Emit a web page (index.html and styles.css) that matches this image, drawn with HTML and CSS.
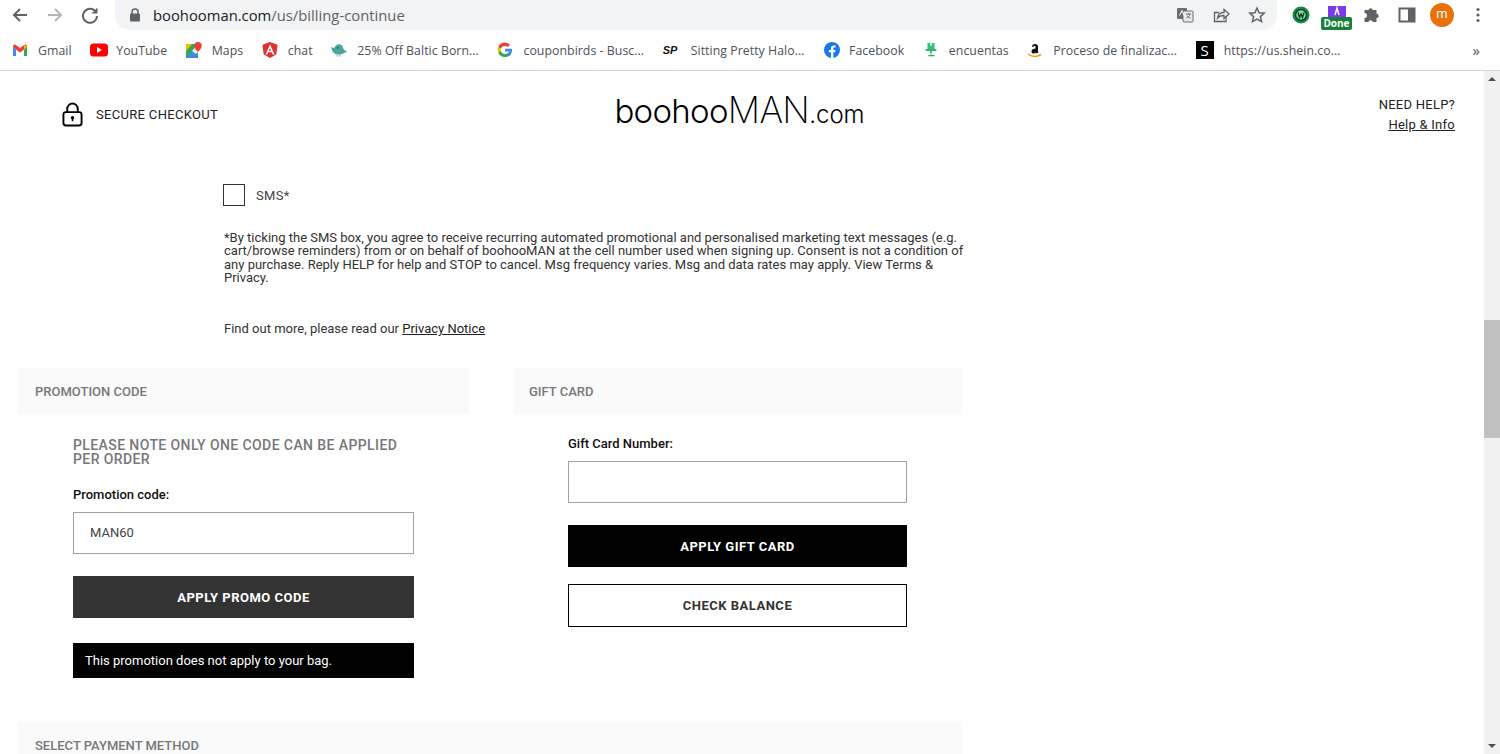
FILE: index.html
```html
<!DOCTYPE html>
<html lang="en">
<head>
    <meta charset="UTF-8">
    <title>boohooMAN - Billing</title>
    <link rel="stylesheet" href="styles.css">
</head>
<body>
    <div class="toolbar">
        <div class="nav-buttons">
            <svg class="nav-icon" viewBox="0 0 18 18"><path d="M16 9H3M9 3L3 9l6 6" fill="none" stroke="#5f6368" stroke-width="2"/></svg>
            <svg class="nav-icon" viewBox="0 0 18 18"><path d="M2 9h13M9 3l6 6-6 6" fill="none" stroke="#b4b6b9" stroke-width="2"/></svg>
            <svg class="nav-icon" viewBox="0 0 18 18"><path d="M14.5 5.5A7 7 0 1 0 16 10" fill="none" stroke="#5f6368" stroke-width="2"/><path d="M16.5 1.5v6h-6z" fill="#5f6368"/></svg>
        </div>
        <div class="omnibox">
            <svg class="lock-small" viewBox="0 0 12 14"><path d="M3 6V4a3 3 0 0 1 6 0v2" fill="none" stroke="#5f6368" stroke-width="1.5"/><rect x="1" y="5.500" width="10" height="8" rx="1" fill="#5f6368"/></svg>
            <span class="url"><span class="url-host">boohooman.com</span>/us/billing-continue</span>
            <div class="omni-actions">
                <svg class="omni-icon" viewBox="0 0 18 18"><rect x="1" y="2" width="10" height="11" rx="1" fill="#6b6f73"/><rect x="7" y="5" width="10" height="11" rx="1" fill="#e8eaed" stroke="#6b6f73"/><path d="M10 8h5M12.500 7v1M14 8c-.5 2-2 3.500-3.500 4M11 9.500c.7 1.200 2 2.200 3.500 2.700" fill="none" stroke="#5f6368" stroke-width=".9"/><path d="M3.500 9.500L6 4.500l2 5" fill="none" stroke="#fff"/></svg>
                <svg class="omni-icon" viewBox="0 0 18 18"><path d="M14 10v5.500H2.500V6.500H7" fill="none" stroke="#5f6368" stroke-width="1.300"/><path d="M5.500 12c.5-3.500 3-5.500 6.500-5.500V3.500l5 4.500-5 4.500V9.500c-3 0-5 .7-6.500 2.500z" fill="none" stroke="#5f6368" stroke-width="1.300"/></svg>
                <svg class="omni-icon" viewBox="0 0 18 18"><path d="M9 2l2.100 4.700 5.100.5-3.800 3.400 1.100 5L9 13l-4.500 2.600 1.100-5-3.800-3.400 5.100-.5z" fill="none" stroke="#5f6368" stroke-width="1.500"/></svg>
            </div>
        </div>
        <div class="extensions">
            <svg class="ext-w" viewBox="0 0 18 18"><circle cx="9" cy="9" r="8.500" fill="#1a8a4c"/><circle cx="9" cy="9" r="5.500" fill="#7fd8a0" stroke="#0b3f24" stroke-width="1.500"/><path d="M6 6.500l1.500 5L9 8l1.500 3.500 1.500-5" fill="none" stroke="#0b3f24" stroke-width="1.300"/></svg>
            <div class="ext-done">
                <div class="ext-done-top"><svg class="ext-a" viewBox="0 0 10 10"><path d="M3 9l2-7 2 7" fill="none" stroke="#fff" stroke-width="1.500"/></svg></div>
                <span class="done-badge">Done</span>
            </div>
            <svg class="ext-puzzle" viewBox="0 0 18 18"><path d="M1.500 7V4h4a2.200 2.200 0 0 1 4.300 0h3.700v3.700a2.200 2.200 0 0 1 0 4.400v3.900H9.700a2.200 2.200 0 0 0-4.300 0H1.500v-4a2.300 2.300 0 0 0 0-5z" fill="#5f6368"/></svg>
            <svg class="ext-panel" viewBox="0 0 18 18"><rect x="1.500" y="2.500" width="15" height="13" fill="none" stroke="#5f6368" stroke-width="2"/><rect x="10" y="2.500" width="6.500" height="13" fill="#5f6368"/></svg>
            <span class="avatar">m</span>
            <svg class="ext-menu" viewBox="0 0 4 16"><circle cx="2" cy="2.500" r="1.600" fill="#5f6368"/><circle cx="2" cy="8" r="1.600" fill="#5f6368"/><circle cx="2" cy="13.500" r="1.600" fill="#5f6368"/></svg>
        </div>
    </div>

    <div class="bookmarks">
        <a class="bookmark">
            <svg class="bm-icon" viewBox="0 0 16 16"><path d="M1 14V4l7 5 7-5v10h-3V7.500L8 10.500 4 7.500V14z" fill="#e8e8e8"/><path d="M1 14h3V7.500L1 4.500z" fill="#4285f4"/><path d="M12 14h3V4.500l-3 3z" fill="#34a853"/><path d="M1 4.500C1 2.500 3 1.800 4 3l4 3 4-3c1-1.200 3-.5 3 1.500L12 7.500 8 10.500 4 7.500z" fill="#ea4335"/><path d="M12 3l3 1.500L12 7.500z" fill="#fbbc04"/></svg>
            <span>Gmail</span>
        </a>
        <a class="bookmark">
            <svg class="bm-icon bm-wide" viewBox="0 0 18 14"><rect width="18" height="13" y=".5" rx="3.500" fill="#f00"/><path d="M7 4l5 3-5 3z" fill="#fff"/></svg>
            <span>YouTube</span>
        </a>
        <a class="bookmark">
            <svg class="bm-icon" viewBox="0 0 16 16"><path d="M0 2h12v14H0z" fill="#34a853"/><path d="M0 16l7-7 5 7z" fill="#4285f4"/><path d="M0 2h6L0 9z" fill="#fbbc04"/><path d="M6 9l5-6 1 7-2 2z" fill="#e8e8e8"/><path d="M12 0a3.800 3.800 0 0 1 3.800 3.800C15.800 6.500 12 10 12 10S8.200 6.500 8.200 3.800A3.800 3.800 0 0 1 12 0z" fill="#ea4335"/></svg>
            <span>Maps</span>
        </a>
        <a class="bookmark">
            <svg class="bm-icon" viewBox="0 0 16 16"><path d="M8 0l7.500 2.700-1.200 9.800L8 16l-6.300-3.500L.5 2.700z" fill="#dd3333"/><path d="M8 2.500L3.500 12.500h1.800l.9-2.300h3.600l.9 2.300h1.800zM8 6l1.200 2.800H6.800z" fill="#fff"/></svg>
            <span>chat</span>
        </a>
        <a class="bookmark">
            <svg class="bm-icon" viewBox="0 0 18 16"><path d="M0 5c2 0 3 1 3.500 1C4.500 3 7 1 10 1.500c2 .4 3 2 3.500 4 .6 2 2.500 3.500 4.500 4.500-1 1-2 1-3 1-2 2-8 3-11 1C2 11 1 8 0 5z" fill="#4aa89a"/><path d="M7 13v2.500M10 13v2.500" stroke="#4aa89a"/><circle cx="7.500" cy="5.500" r="1" fill="#1d5c52"/></svg>
            <span>25% Off Baltic Born...</span>
        </a>
        <a class="bookmark">
            <svg class="bm-icon" viewBox="0 0 16 16"><path d="M15 8.200c0-.6 0-1-.1-1.500H8v2.800h4a3.400 3.400 0 0 1-1.500 2.200v1.900h2.400c1.400-1.300 2.100-3.200 2.100-5.400z" fill="#4285f4"/><path d="M8 15c2 0 3.600-.7 4.900-1.800l-2.400-1.900c-.7.500-1.500.7-2.500.7-1.900 0-3.500-1.300-4.100-3H1.400v2A7 7 0 0 0 8 15z" fill="#34a853"/><path d="M3.900 9.100a4.200 4.200 0 0 1 0-2.700v-2H1.400a7 7 0 0 0 0 6.300z" fill="#fbbc04"/><path d="M8 3.900c1.100 0 2 .4 2.800 1.100L13 2.900A7 7 0 0 0 1.400 4.400l2.500 2c.6-1.700 2.200-2.500 4.100-2.500z" fill="#ea4335"/></svg>
            <span>couponbirds - Busc...</span>
        </a>
        <a class="bookmark">
            <span class="bm-sp">SP</span>
            <span>Sitting Pretty Halo...</span>
        </a>
        <a class="bookmark">
            <svg class="bm-icon bm-wide" viewBox="0 0 18 18"><circle cx="9" cy="9" r="9" fill="#1877f2"/><path d="M12.500 11.500l.4-2.500h-2.400V7.400c0-.7.300-1.300 1.400-1.300H13V4c-2.500-.5-5.200-.2-5.200 3v2H5.400v2.500h2.400V18h2.700v-6.500z" fill="#fff"/></svg>
            <span>Facebook</span>
        </a>
        <a class="bookmark">
            <svg class="bm-icon" viewBox="0 0 16 18"><path d="M4 1h3v3h2V1h3v7H4z" fill="#2ec27e"/><path d="M2 8h12v2H2z" fill="#1aa866"/><path d="M7 10h2v3H7z" fill="#2ec27e"/><path d="M4 16c2-2 6-2 8-1v1z" fill="#1aa866"/></svg>
            <span>encuentas</span>
        </a>
        <a class="bookmark">
            <svg class="bm-icon" viewBox="0 0 16 16"><path d="M5 4.500C5 3 6.500 2 8 2c2 0 3 1 3 2.500V9c0 .6.200 1 .5 1.200L10 11.500l-1-.8c-1.500 1.300-4.500 1.200-4.500-1.200 0-2.200 2-3 4-3V5c0-1.200-2-1.200-2.300.2z" fill="#111"/><path d="M1 12c4 3 9 3 13 .5" fill="none" stroke="#f90" stroke-width="1.500"/></svg>
            <span>Proceso de finalizac...</span>
        </a>
        <a class="bookmark">
            <span class="bm-shein">S</span>
            <span>https://us.shein.co...</span>
        </a>
        <span class="bm-more">»</span>
    </div>

    <div class="viewport">
        <div class="page">
            <header class="site-header">
                <div class="secure">
                    <svg class="secure-icon" viewBox="0 0 22 26"><path d="M5.500 11V7a5.500 5.500 0 0 1 11 0v4" fill="none" stroke="#000" stroke-width="2"/><rect x="1.500" y="10.500" width="19" height="14" rx="2.500" fill="none" stroke="#000" stroke-width="2"/><circle cx="11" cy="16.500" r="1.800"/><path d="M10.200 17h1.600v3h-1.600z"/></svg>
                    <span>SECURE CHECKOUT</span>
                </div>
                <div class="logo">boohoo<span class="logo-man">MAN</span><span class="logo-com">.com</span></div>
                <div class="help">
                    <span>NEED HELP?</span>
                    <a class="link">Help &amp; Info</a>
                </div>
            </header>

            <main class="checkout">
                <section class="consent">
                    <label class="sms-row"><span class="checkbox"></span>SMS*</label>
                    <p class="consent-text">*By ticking the SMS box, you agree to receive recurring automated promotional and personalised marketing text messages (e.g. cart/browse reminders) from or on behalf of boohooMAN at the cell number used when signing up. Consent is not a condition of any purchase. Reply HELP for help and STOP to cancel. Msg frequency varies. Msg and data rates may apply. View Terms &amp; Privacy.</p>
                    <p class="privacy-note">Find out more, please read our <a class="link">Privacy Notice</a></p>
                </section>

                <div class="code-panels">
                    <section class="panel panel-promo">
                        <h2 class="panel-title">PROMOTION CODE</h2>
                        <div class="panel-body">
                            <h3 class="note">PLEASE NOTE ONLY ONE CODE CAN BE APPLIED PER ORDER</h3>
                            <label class="field-label">Promotion code:</label>
                            <div class="text-field">MAN60</div>
                            <button class="btn btn-dark">APPLY PROMO CODE</button>
                            <div class="promo-error">This promotion does not apply to your bag.</div>
                        </div>
                    </section>
                    <section class="panel panel-gift">
                        <h2 class="panel-title">GIFT CARD</h2>
                        <div class="panel-body">
                            <label class="field-label">Gift Card Number:</label>
                            <div class="text-field"></div>
                            <button class="btn btn-black">APPLY GIFT CARD</button>
                            <button class="btn btn-outline">CHECK BALANCE</button>
                        </div>
                    </section>
                </div>

                <h2 class="panel-title payment-title">SELECT PAYMENT METHOD</h2>
            </main>
        </div>

        <div class="scrollbar">
            <svg class="scroll-arrow" viewBox="0 0 16 16"><path d="M4 10l4-4 4 4z" fill="#505050"/></svg>
            <div class="scroll-track"><div class="scroll-thumb"></div></div>
            <svg class="scroll-arrow" viewBox="0 0 16 16"><path d="M4 6l4 4 4-4z" fill="#505050"/></svg>
        </div>
    </div>
</body>
</html>
```

FILE: styles.css
```css
html, body {
    margin: 0;
    padding: 0;
    height: 754px;
    overflow: hidden;
    background-color: #fff;
    font-family: 'Roboto', 'Liberation Sans', sans-serif;
}

/* browser bar */
.toolbar {
    display: flex;
    align-items: center;
    height: 30px;
}

.nav-buttons {
    display: flex;
    align-items: center;
    gap: 17px;
    width: 115px;
    padding-left: 11px;
    box-sizing: border-box;
}

.nav-icon {
    width: 18px;
    height: 18px;
}

.omnibox {
    display: flex;
    align-items: center;
    width: 1162px;
    height: 30px;
    background-color: #f1f3f4;
    border-radius: 0 0 15px 15px;
    box-sizing: border-box;
    padding: 0 11px 0 14px;
}

.lock-small {
    width: 12px;
    height: 14px;
    margin-right: 12px;
}

.url {
    font-family: 'Open Sans', sans-serif;
    font-size: 14.800px;
    color: #5f6368;
}

.url-host {
    color: #202124;
}

.omni-actions {
    display: flex;
    gap: 18px;
    margin-left: auto;
}

.omni-icon {
    width: 18px;
    height: 18px;
}

.extensions {
    display: flex;
    align-items: center;
    padding-left: 15px;
}

.ext-w {
    width: 18px;
    height: 18px;
    margin-right: 11px;
}

.ext-done {
    position: relative;
    width: 31px;
    height: 30px;
    margin-right: 11px;
}

.ext-done-top {
    width: 18px;
    height: 11px;
    margin: 6px auto 0;
    background-color: #7c3aed;
}

.ext-a {
    display: block;
    width: 10px;
    height: 10px;
    margin: 0 auto;
}

.done-badge {
    position: absolute;
    left: 0;
    top: 17px;
    width: 31px;
    height: 13px;
    line-height: 13px;
    border-radius: 2px;
    background-color: #188038;
    color: #fff;
    font-family: 'Open Sans', sans-serif;
    font-size: 10px;
    font-weight: 700;
    text-align: center;
}

.ext-puzzle {
    width: 18px;
    height: 18px;
    margin-right: 17px;
}

.ext-panel {
    width: 18px;
    height: 18px;
    margin-right: 14px;
}

.avatar {
    width: 24px;
    height: 24px;
    line-height: 22px;
    border-radius: 50%;
    background-color: #e8710a;
    color: #fff;
    font-size: 13px;
    text-align: center;
    margin-right: 22px;
}

.ext-menu {
    width: 4px;
    height: 16px;
}

/* bookmarks */
.bookmarks {
    display: flex;
    align-items: center;
    height: 40px;
    padding-left: 12px;
    border-bottom: 1px solid #d4d5d7;
    font-family: 'Open Sans', sans-serif;
    font-size: 12.300px;
    letter-spacing: 0.05px;
    color: #4d5156;
}

.bookmark {
    display: flex;
    align-items: center;
    gap: 10px;
    margin-right: 18.600px;
    white-space: nowrap;
}

.bm-icon {
    width: 16px;
    height: 16px;
    flex-shrink: 0;
}

.bm-wide {
    width: 18px;
    margin-right: -2px;
}

.bm-sp {
    width: 18px;
    font-family: 'Liberation Sans', sans-serif;
    font-size: 11px;
    font-weight: 700;
    font-style: italic;
    color: #111;
}

.bm-shein {
    width: 18px;
    height: 18px;
    line-height: 18px;
    background-color: #000;
    color: #fff;
    font-size: 15px;
    text-align: center;
}

.bm-more {
    margin-left: auto;
    margin-right: 20px;
    font-size: 15px;
}

/* page */
.viewport {
    display: flex;
    height: 683px;
}

.page {
    flex: 1;
    min-width: 0;
    font-size: 13px;
    color: #333;
    overflow: hidden;
}

.scrollbar {
    display: flex;
    flex-direction: column;
    width: 16px;
    background-color: #f1f1f1;
}

.scroll-arrow {
    width: 16px;
    height: 16px;
    flex-shrink: 0;
}

.scroll-track {
    flex: 1;
}

.scroll-thumb {
    height: 118px;
    margin-top: 233px;
    background-color: #c1c1c1;
}

.site-header {
    display: grid;
    grid-template-columns: 1fr auto 1fr;
    align-items: center;
    height: 82px;
    padding: 2px 29px 0 62px;
}

.secure {
    display: flex;
    align-items: center;
    gap: 13px;
    color: #222;
    font-size: 13px;
    letter-spacing: 0.32px;
}

.secure-icon {
    width: 21px;
    height: 25px;
}

.logo {
    font-family: 'Inter', sans-serif;
    font-weight: 300;
    font-size: 33px;
    letter-spacing: -0.7px;
    color: #000;
    margin: 0 38px 9px 0;
}

.logo-man {
    font-size: 36px;
    font-weight: 200;
    letter-spacing: -0.7px;
}

.logo-com {
    font-size: 24px;
    font-weight: 300;
    letter-spacing: 0;
}

.help {
    display: flex;
    flex-direction: column;
    align-items: flex-end;
    gap: 5px;
    color: #222;
    font-size: 13px;
    letter-spacing: 0.25px;
}

.link {
    color: #222;
    text-decoration: underline;
}

.checkout {
    width: 944px;
    margin-left: 18px;
}

.consent {
    padding: 29px 0 0 206px;
}

.sms-row {
    display: flex;
    align-items: center;
    gap: 11px;
    margin-left: -1px;
    font-size: 13px;
    letter-spacing: 0.3px;
    color: #444;
}

.checkbox {
    width: 20px;
    height: 20px;
    border: 1px solid #333;
    background-color: #fff;
}

.consent-text {
    margin: 25px -8px 0 0;
    line-height: 13.300px;
    color: #333;
}

.privacy-note {
    margin: 38px 0 0;
    line-height: 14px;
}

.code-panels {
    display: flex;
    justify-content: space-between;
    margin-top: 32px;
}

.panel-promo {
    width: 451px;
}

.panel-gift {
    width: 448px;
}

.panel-title {
    margin: 0;
    height: 46px;
    line-height: 47px;
    padding-left: 17px;
    background-color: #fafafa;
    font-size: 13px;
    font-weight: 500;
    color: #77777a;
}

.panel-gift .panel-title {
    padding-left: 15px;
}

.panel-promo .panel-body {
    padding: 24px 55px 0;
}

.panel-gift .panel-body {
    padding: 23px 55px 0 54px;
}

.note {
    margin: 0 0 22px;
    font-size: 14px;
    font-weight: 500;
    line-height: 14px;
    color: #77777a;
    letter-spacing: 0.4px;
}

.field-label {
    display: block;
    margin-bottom: 10px;
    font-size: 13px;
    font-weight: 500;
    line-height: 14px;
    color: #111;
}

.text-field {
    box-sizing: border-box;
    height: 42px;
    line-height: 40px;
    padding-left: 16px;
    border: 1px solid #a0a0a0;
    background-color: #fff;
    font-size: 13px;
    color: #444;
}

.btn {
    display: block;
    box-sizing: border-box;
    width: 100%;
    height: 42px;
    border: none;
    font-family: inherit;
    font-size: 13px;
    font-weight: 700;
    letter-spacing: 0.5px;
}

.btn-dark {
    margin-top: 22px;
    background-color: #333;
    color: #fff;
}

.btn-black {
    margin-top: 22px;
    background-color: #000;
    color: #fff;
}

.btn-outline {
    margin-top: 17px;
    height: 43px;
    background-color: #fff;
    border: 1px solid #000;
    color: #333;
}

.promo-error {
    box-sizing: border-box;
    height: 35px;
    line-height: 35px;
    margin-top: 25px;
    padding-left: 12px;
    background-color: #000;
    color: #fff;
    font-size: 13px;
}

.payment-title {
    margin-top: 44px;
}
```
